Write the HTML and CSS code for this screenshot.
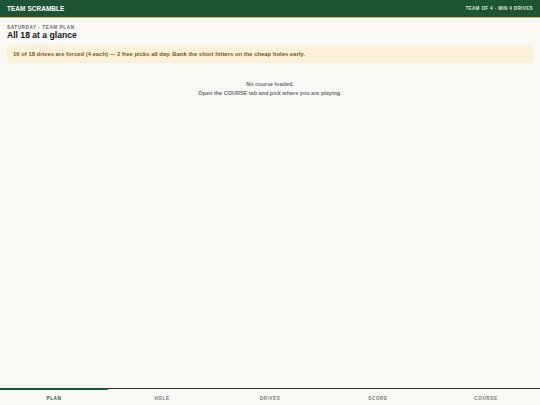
FILE: index.html
```html
<!DOCTYPE html>
<html>
<head>
<meta charset="utf-8">
<link rel="stylesheet" href="styles.css">
</head>
<body>
<div class="app">
  <header class="topbar">
    <span class="brand">TEAM SCRAMBLE</span>
    <span class="rule">TEAM OF 4 · MIN 4 DRIVES</span>
  </header>
  <main class="main">
    <div class="eyebrow">SATURDAY · TEAM PLAN</div>
    <h1 class="title">All 18 at a glance</h1>
    <div class="banner">16 of 18 drives are forced (4 each) — 2 free picks all day. Bank the short hitters on the cheap holes early.</div>
    <div class="empty">
      <p>No course loaded.</p>
      <p>Open the COURSE tab and pick where you are playing.</p>
    </div>
  </main>
  <nav class="tabs">
    <div class="tab active">PLAN</div>
    <div class="tab">HOLE</div>
    <div class="tab">DRIVES</div>
    <div class="tab">SCORE</div>
    <div class="tab">COURSE</div>
  </nav>
</div>
</body>
</html>
```
FILE: styles.css
```css
* { box-sizing: border-box; }
html, body { margin: 0; padding: 0; }
body {
  width: 540px;
  height: 405px;
  font-family: "Liberation Sans", Arial, sans-serif;
  background: #f9f8f5;
  overflow: hidden;
}
.app {
  display: flex;
  flex-direction: column;
  height: 405px;
}
.topbar {
  height: 18px;
  background: #1d5434;
  border-bottom: 1.5px solid #c9b765;
  display: flex;
  align-items: center;
  justify-content: space-between;
  padding: 0 7px;
}
.brand {
  color: #ffffff;
  font-weight: 700;
  font-size: 6.4px;
  letter-spacing: 0.1px;
}
.rule {
  color: #d9e3d6;
  font-weight: 700;
  font-size: 4.6px;
  letter-spacing: 0.35px;
}
.main {
  flex: 1;
  padding: 7px 7px 0;
}
.eyebrow {
  font-size: 4.6px;
  font-weight: 700;
  letter-spacing: 0.6px;
  color: #6b6b6b;
  line-height: 5px;
}
.title {
  margin: 0;
  font-size: 8.6px;
  font-weight: 700;
  color: #151515;
  line-height: 10px;
}
.banner {
  margin-top: 5px;
  background: #fbf1d9;
  border-radius: 4px;
  padding: 5px 6px;
  font-size: 5.9px;
  font-weight: 700;
  color: #7a5a1c;
  line-height: 8px;
}
.empty {
  margin-top: 18px;
  text-align: center;
  color: #6f6f6f;
  font-size: 5.5px;
  font-weight: 700;
}
.empty p {
  margin: 0 0 3px;
  line-height: 6px;
}
.tabs {
  height: 17px;
  border-top: 1px solid #2a2a2a;
  display: flex;
}
.tab {
  flex: 1;
  position: relative;
  display: flex;
  align-items: center;
  justify-content: center;
  font-size: 4.6px;
  font-weight: 700;
  letter-spacing: 0.6px;
  color: #777;
  padding-top: 2px;
}
.tab.active {
  color: #1d5434;
}
.tab.active::before {
  content: "";
  position: absolute;
  left: 0;
  right: 0;
  top: -1px;
  height: 2px;
  background: #1d5434;
}
```
